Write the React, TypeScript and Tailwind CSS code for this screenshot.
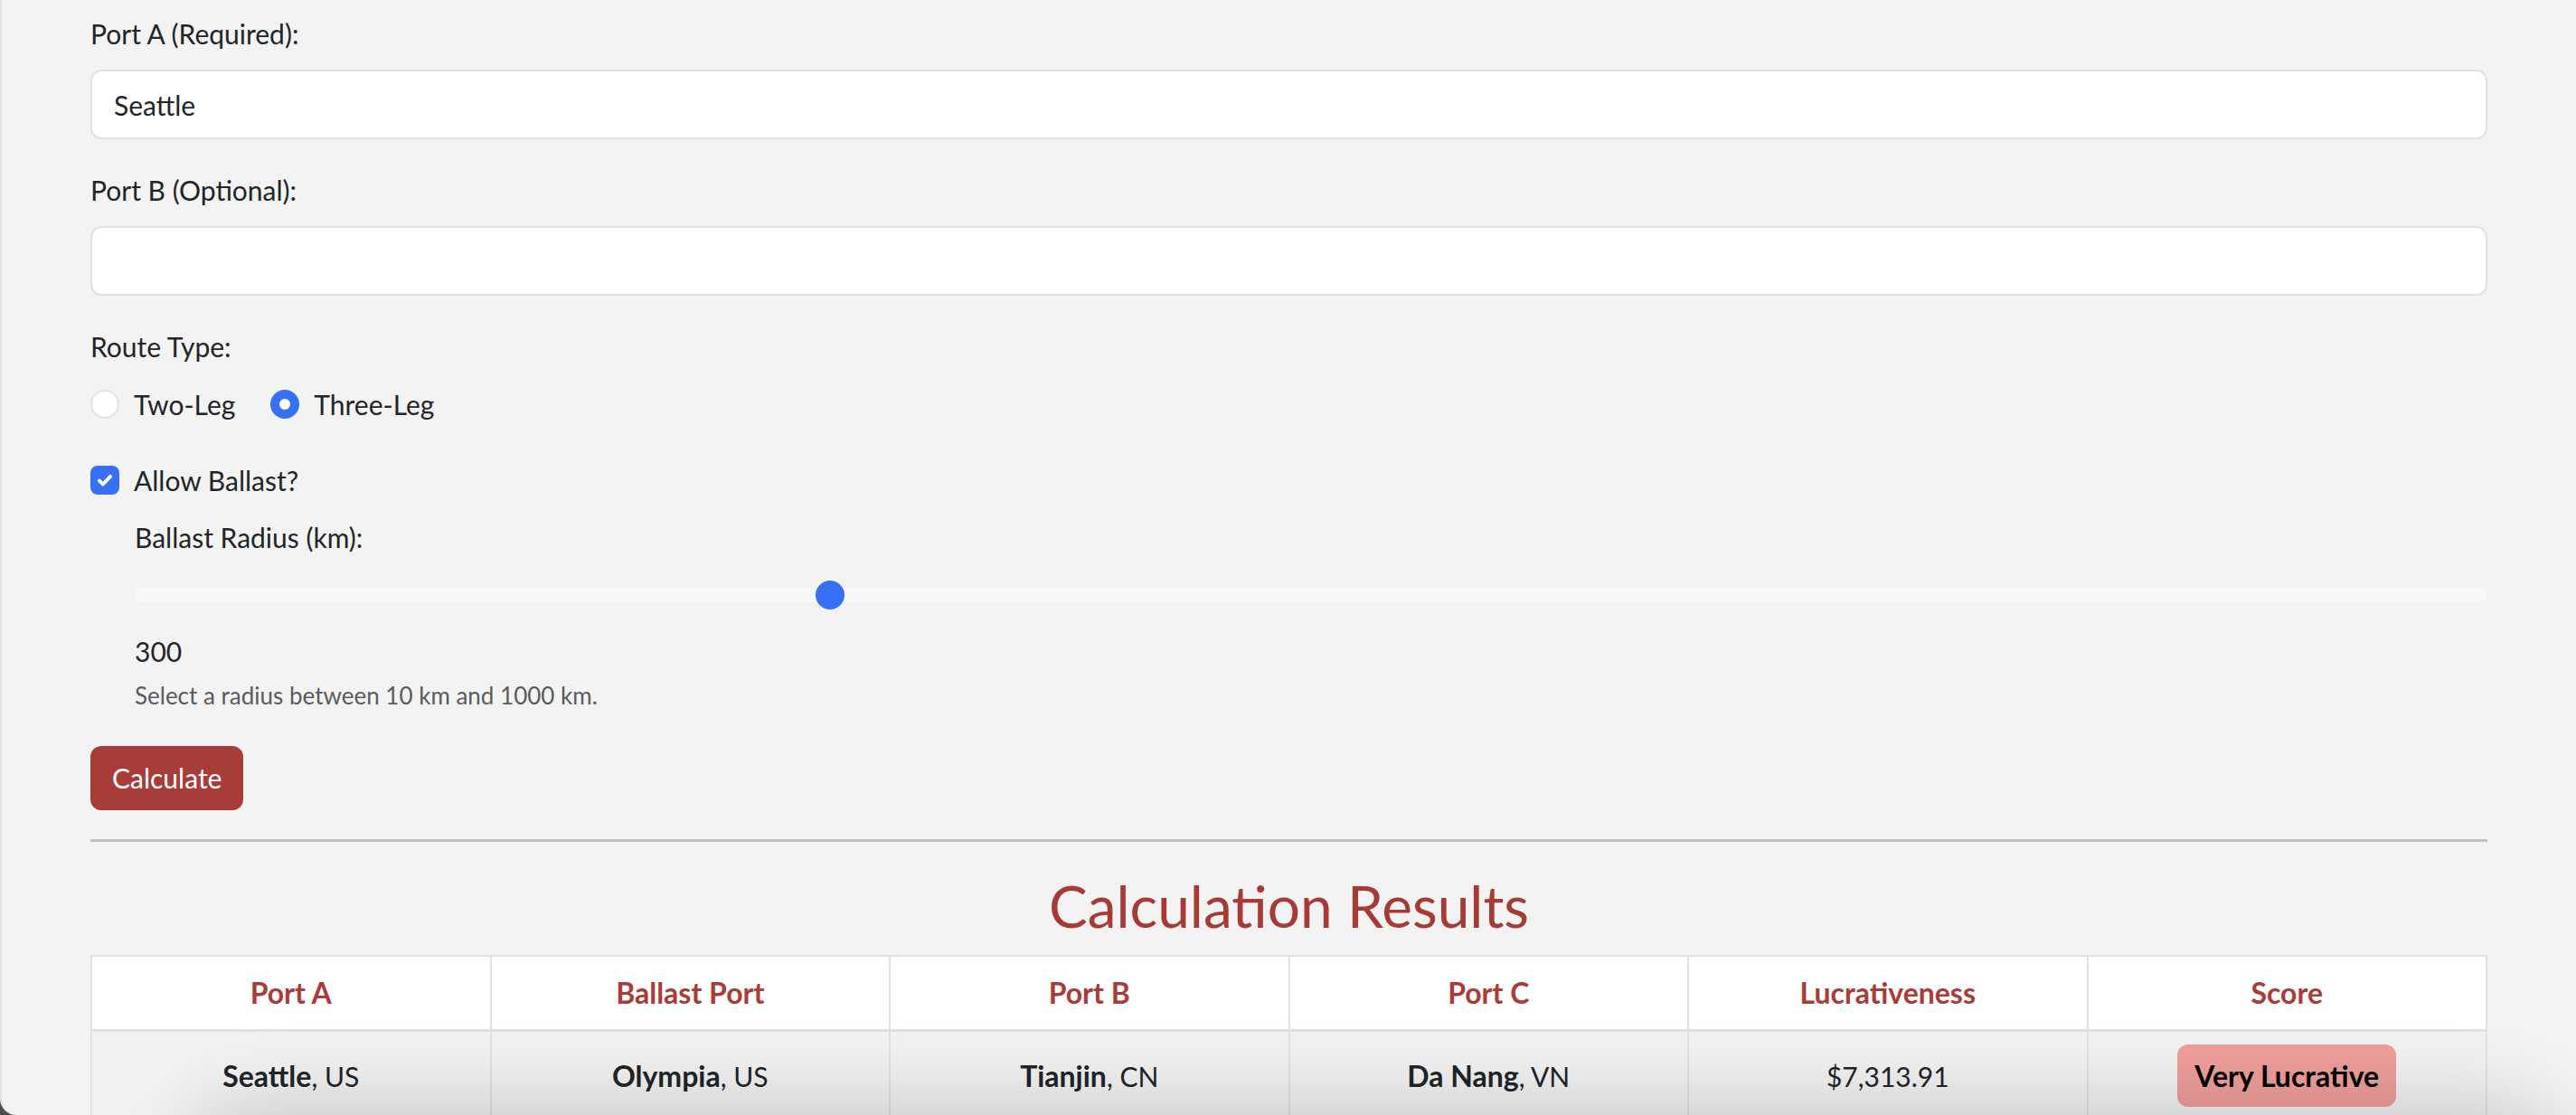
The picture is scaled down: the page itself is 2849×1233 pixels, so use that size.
import React from 'react';

const body = { fontFamily: 'Lato, "Noto Sans", sans-serif' };

const rows = [
  { a: 'Seattle', ac: 'US', ballast: 'Olympia', bc: 'US', b: 'Tianjin', bcc: 'CN', c: 'Da Nang', cc: 'VN', value: '$7,313.91', score: 'Very Lucrative' },
];

const headers = ['Port A', 'Ballast Port', 'Port B', 'Port C', 'Lucrativeness', 'Score'];

function Place({ name, code }: { name: string; code: string }) {
  return (
    <span>
      <span className="text-[32px] font-bold">{name}</span>, {code}
    </span>
  );
}

export default function App() {
  const radius = 300;
  const pct = ((radius - 10) / (1000 - 10)) * 100;

  return (
    <div className="h-screen bg-[#4b4b4b]" style={body}>
      <div className="relative h-screen overflow-hidden rounded-bl-[18px] border-l-2 border-[#e2e2e2] bg-[#f3f3f3] text-[#212529]">
        <div className="px-[98px] pt-[13px]">
          {/* Port A */}
          <label className="mb-[16px] block text-[30px] leading-[48px]">Port A (Required):</label>
          <input
            readOnly
            value="Seattle"
            className="mb-[32px] block h-[77px] w-full rounded-[12px] border-2 border-[#dee2e6] bg-white px-[24px] text-[30px] text-[#212529] outline-none"
          />

          {/* Port B */}
          <label className="mb-[16px] block text-[30px] leading-[48px]">Port B (Optional):</label>
          <input
            readOnly
            value=""
            className="mb-[32px] block h-[77px] w-full rounded-[12px] border-2 border-[#dee2e6] bg-white px-[24px] text-[30px] outline-none"
          />

          {/* Route type */}
          <div className="mb-[16px] text-[30px] leading-[48px]">Route Type:</div>
          <div className="flex h-[48px] items-center text-[30px]">
            <span className="h-[32px] w-[32px] rounded-full border-2 border-[#dee2e6] bg-white"></span>
            <span className="ml-[16px]">Two-Leg</span>
            <span className="ml-[39px] flex h-[32px] w-[32px] items-center justify-center rounded-full bg-[#3570f5]">
              <span className="h-[12px] w-[12px] rounded-full bg-white"></span>
            </span>
            <span className="ml-[16px]">Three-Leg</span>
          </div>

          {/* Ballast */}
          <div className="mt-[36px] flex h-[48px] items-center text-[30px]">
            <span className="flex h-[32px] w-[32px] items-center justify-center rounded-[8px] bg-[#3570f5]">
              <svg width="22" height="22" viewBox="0 0 20 20" fill="none">
                <path d="M4.5 10.5l3.6 3.6 7.4-7.8" stroke="white" strokeWidth="3.6" strokeLinecap="round" strokeLinejoin="round" />
              </svg>
            </span>
            <span className="ml-[16px]">Allow Ballast?</span>
          </div>

          <div className="ml-[49px]">
            <div className="mt-[15px] mb-[16px] text-[30px] leading-[48px]">Ballast Radius (km):</div>
            <div className="flex h-[48px] items-center">
              <div className="relative h-[16px] w-full rounded-full bg-[#f8f8f9]">
                <div
                  className="absolute top-1/2 h-[32px] w-[32px] -translate-y-1/2 rounded-full bg-[#3570f5]"
                  style={{ left: `calc(${pct / 100} * (100% - 32px))` }}
                ></div>
              </div>
            </div>
            <div className="mt-[14px] text-[30px] leading-[48px]">{radius}</div>
            <div className="mt-[4px] text-[26px] leading-[42px] text-[#595c5f]">Select a radius between 10 km and 1000 km.</div>
          </div>

          <button className="mt-[35px] h-[71px] rounded-[12px] bg-[#a83c38] px-[24px] text-[30px] text-white">
            Calculate
          </button>

          <hr className="mt-[32px] border-0 border-t-[3px] border-[#c2c2c2]" />

          <h2 className="mt-[32px] mb-[16px] text-center text-[64px] leading-[77px] font-normal text-[#a83a36]">
            Calculation Results
          </h2>

          <table className="w-full table-fixed border-collapse border-2 border-[#dee2e6] text-[32px]">
            <thead>
              <tr className="bg-white">
                {headers.map((h) => (
                  <th key={h} className="border-2 border-b-[3px] border-[#dee2e6] py-[16px] leading-[48px] font-bold text-[#a83c38]">
                    {h}
                  </th>
                ))}
              </tr>
            </thead>
            <tbody>
              {rows.map((r, i) => (
                <tr key={i} className="bg-[#f2f2f2] text-center text-[30px]">
                  <td className="border-2 border-[#dee2e6] py-[14px] leading-[48px]"><Place name={r.a} code={r.ac} /></td>
                  <td className="border-2 border-[#dee2e6] py-[14px] leading-[48px]"><Place name={r.ballast} code={r.bc} /></td>
                  <td className="border-2 border-[#dee2e6] py-[14px] leading-[48px]"><Place name={r.b} code={r.bcc} /></td>
                  <td className="border-2 border-[#dee2e6] py-[14px] leading-[48px]"><Place name={r.c} code={r.cc} /></td>
                  <td className="border-2 border-[#dee2e6] py-[14px] leading-[48px]">{r.value}</td>
                  <td className="border-2 border-[#dee2e6] py-[14px]">
                    <span className="inline-block rounded-[12px] bg-[#ef9e9b] px-[19px] py-[10px] text-[32px] leading-[49px] font-bold text-black">
                      {r.score}
                    </span>
                  </td>
                </tr>
              ))}
            </tbody>
          </table>
        </div>

        {/* soft shadow from content below the fold */}
        <div className="pointer-events-none absolute left-[230px] right-[40px] top-[1262px] h-[300px] rounded-[60px] shadow-[0_0_90px_40px_rgba(0,0,0,0.18)]"></div>
      </div>
    </div>
  );
}
